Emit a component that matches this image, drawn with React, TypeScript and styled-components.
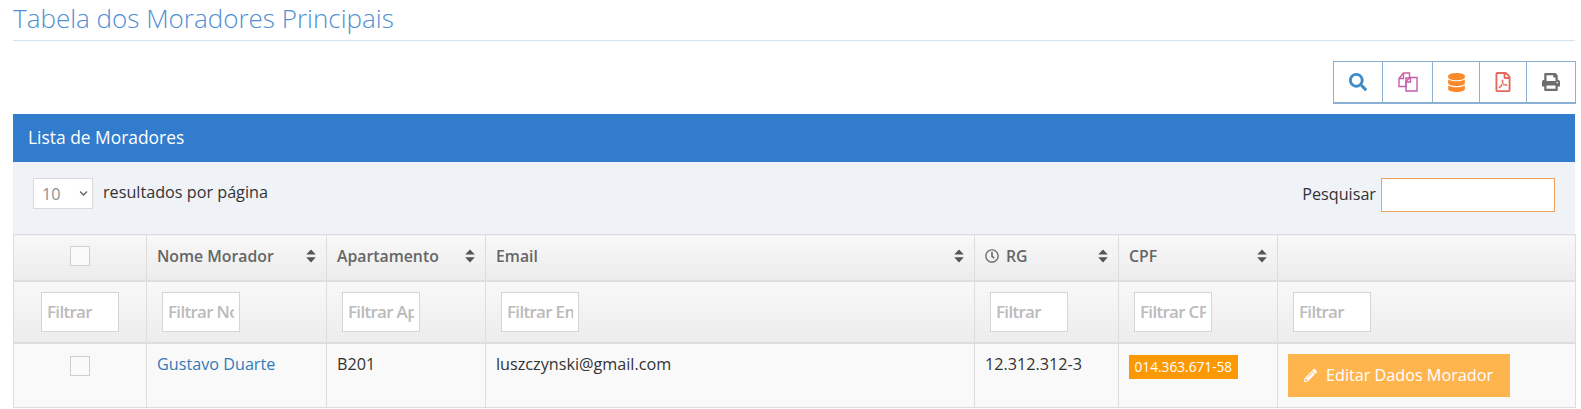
import React from "react";
import styled, { createGlobalStyle } from "styled-components";
import { FaSearch, FaDatabase, FaRegFilePdf, FaPrint, FaRegClock, FaPencilAlt, FaChevronDown } from "react-icons/fa";

const Global = createGlobalStyle`
  html, body { margin: 0; padding: 0; background: #fff; height: 409px; overflow: hidden; }
  body { font-family: "Open Sans", "Liberation Sans", sans-serif; font-size: 16.2px; color: #333; }
  * { box-sizing: border-box; }
`;

const Page = styled.div`
  padding: 0 6px 0 13px;
`;
const Title = styled.h3`
  margin: 0;
  height: 41px;
  font-size: 26px;
  line-height: 36px;
  font-weight: 300;
  color: #4f90d2;
  border-bottom: 1px solid #d3e4f0;
`;
const ToolRow = styled.div`
  display: flex;
  justify-content: flex-end;
  margin: 20px -1px 10px 0;
`;
const ToolBox = styled.div`
  display: flex;
  height: 43px;
  border: 1px solid #8cb0d2;
  border-bottom-width: 2px;
`;
const ToolButton = styled.div<{ $w: number; $color: string; $size?: number }>`
  width: ${(p) => p.$w}px;
  display: flex;
  align-items: center;
  justify-content: center;
  color: ${(p) => p.$color};
  font-size: ${(p) => p.$size ?? 18}px;
  & + & { border-left: 1px solid #8cb0d2; }
`;
const PanelHead = styled.div`
  height: 48px;
  background: #317ccc;
  color: #fff;
  font-size: 17.4px;
  font-weight: 400;
  line-height: 46px;
  padding-left: 15px;
`;
const Controls = styled.div`
  height: 72px;
  background: #eff2f7;
  display: flex;
  justify-content: space-between;
  padding: 16px 20px 0 20px;
`;
const LengthGroup = styled.div`
  display: flex;
  align-items: flex-start;
  gap: 10px;
  line-height: 28px;
`;
const SelectBox = styled.div`
  width: 60px;
  height: 31px;
  background: #fff;
  border: 1px solid #d9d9d9;
  color: #8f8f8f;
  display: flex;
  align-items: center;
  justify-content: space-between;
  padding: 0 4px 0 8px;
  svg { font-size: 9px; color: #666; }
`;
const SearchGroup = styled.div`
  display: flex;
  align-items: flex-start;
  gap: 5px;
  line-height: 32px;
`;
const SearchInput = styled.div`
  width: 174px;
  height: 34px;
  background: #fff;
  border: 1px solid #f0a35a;
`;
const Table = styled.table`
  width: 100%;
  border-collapse: collapse;
  table-layout: fixed;
`;
const Th = styled.th`
  height: 46px;
  padding: 0 10px;
  text-align: left;
  font-weight: 600;
  font-size: 15.8px;
  color: #666;
  border: 1px solid #dddddd;
  border-bottom-width: 2px;
  background: linear-gradient(#f8f8f8, #ececec);
`;
const HeadInner = styled.div`
  display: flex;
  align-items: center;
  justify-content: space-between;
  margin-top: -3px;
`;
const HeadLabel = styled.span`
  display: flex;
  align-items: center;
  gap: 7px;
  svg { font-size: 14px; }
`;
const FilterTh = styled(Th)`
  height: 62px;
  padding: 0 15px;
`;
const FilterCenter = styled.div`
  display: flex;
  justify-content: center;
`;
const FilterInput = styled.input`
  display: block;
  width: 78px;
  height: 40px;
  padding: 0 5px;
  border: 1px solid #d5d5d5;
  background: #fff;
  font-family: "Open Sans", sans-serif;
  font-size: 17px;
  font-weight: 600;
  letter-spacing: -0.7px;
  outline: none;
  &::placeholder { color: #bbb; opacity: 1; font-weight: 600; }
`;
const Td = styled.td`
  height: 65px;
  padding: 9px 10px 0;
  vertical-align: top;
  border: 1px solid #dddddd;
  background: #f9f9f9;
  color: #333;
`;
const CheckCell = styled.div`
  display: flex;
  justify-content: center;
`;
const RowCheck = styled(CheckCell)`
  padding-top: 3px;
  margin-left: -1px;
`;
const HeadCheck = styled(CheckCell)`
  margin-left: -1px;
  margin-top: -3px;
`;
const Check = styled.span`
  display: block;
  width: 20px;
  height: 20px;
  border: 1px solid #cfcfcf;
  background: #fafafa;
`;
const NameLink = styled.a`
  color: #337ab7;
  text-decoration: none;
`;
const Badge = styled.span`
  display: inline-block;
  margin-top: 2px;
  background: #fb9905;
  color: #fff;
  font-size: 13.7px;
  line-height: 24px;
  height: 24px;
  padding: 0 5.5px;
  white-space: nowrap;
`;
const EditButton = styled.div`
  display: inline-flex;
  align-items: center;
  gap: 9px;
  width: 222px;
  height: 43px;
  margin: 1px 0 0 0;
  padding-left: 16px;
  background: #ffb54d;
  color: #fff;
  white-space: nowrap;
  svg { font-size: 13px; }
`;

const Sort = () => (
  <svg width="10" height="14" viewBox="0 0 10 14" fill="#555">
    <path d="M5 0.5 L9.8 5.6 H0.2 Z M0.2 8.2 H9.8 L5 13.5 Z" />
  </svg>
);
const FilesIcon = () => (
  <svg width="20" height="20" viewBox="0 0 20 20" fill="none" stroke="currentColor" strokeWidth="1.4">
    <path d="M1 6.5 L5.5 1 H11.5 V6 L8 6 L8 14.5 H1 Z" />
    <path d="M1 6.5 H5.5 V1.5" />
    <path d="M8 9.5 L12 5.5 H19 V19 H8 Z" />
    <path d="M8 10 H12.5 V5.5" />
  </svg>
);

const columns = [133, 180, 159, 489, 144, 159, 298];
const heads = [
  { label: "Nome Morador" },
  { label: "Apartamento" },
  { label: "Email" },
  { label: "RG", clock: true },
  { label: "CPF" },
];
const filters = ["Filtrar", "Filtrar Nome", "Filtrar Apartamento", "Filtrar Email", "Filtrar", "Filtrar CPF", "Filtrar"];

export default function App() {
  return (
    <Page>
      <Global />
      <Title>Tabela dos Moradores Principais</Title>
      <ToolRow>
        <ToolBox>
          <ToolButton $w={48} $color="#3f8ccb"><FaSearch /></ToolButton>
          <ToolButton $w={50} $color="#c75ea9"><FilesIcon /></ToolButton>
          <ToolButton $w={47} $color="#f98a2c" $size={19}><FaDatabase /></ToolButton>
          <ToolButton $w={47} $color="#e4685d" $size={20}><FaRegFilePdf /></ToolButton>
          <ToolButton $w={49} $color="#6d6d6d"><FaPrint /></ToolButton>
        </ToolBox>
      </ToolRow>
      <PanelHead>Lista de Moradores</PanelHead>
      <Controls>
        <LengthGroup>
          <SelectBox>10<FaChevronDown /></SelectBox>
          <span>resultados por página</span>
        </LengthGroup>
        <SearchGroup>
          <span>Pesquisar</span>
          <SearchInput />
        </SearchGroup>
      </Controls>
      <Table>
        <colgroup>
          {columns.map((w, i) => <col key={i} width={w} />)}
        </colgroup>
        <thead>
          <tr>
            <Th><HeadCheck><Check /></HeadCheck></Th>
            {heads.map((h) => (
              <Th key={h.label}>
                <HeadInner>
                  <HeadLabel>{h.clock && <FaRegClock />}{h.label}</HeadLabel>
                  <Sort />
                </HeadInner>
              </Th>
            ))}
            <Th />
          </tr>
          <tr>
            {filters.map((f, i) => (
              <FilterTh key={i}>
                {i === 0 ? <FilterCenter><FilterInput placeholder={f} /></FilterCenter> : <FilterInput placeholder={f} />}
              </FilterTh>
            ))}
          </tr>
        </thead>
        <tbody>
          <tr>
            <Td><RowCheck><Check /></RowCheck></Td>
            <Td><NameLink>Gustavo Duarte</NameLink></Td>
            <Td>B201</Td>
            <Td>luszczynski@gmail.com</Td>
            <Td>12.312.312-3</Td>
            <Td><Badge>014.363.671-58</Badge></Td>
            <Td><EditButton><FaPencilAlt />Editar Dados Morador</EditButton></Td>
          </tr>
        </tbody>
      </Table>
    </Page>
  );
}
